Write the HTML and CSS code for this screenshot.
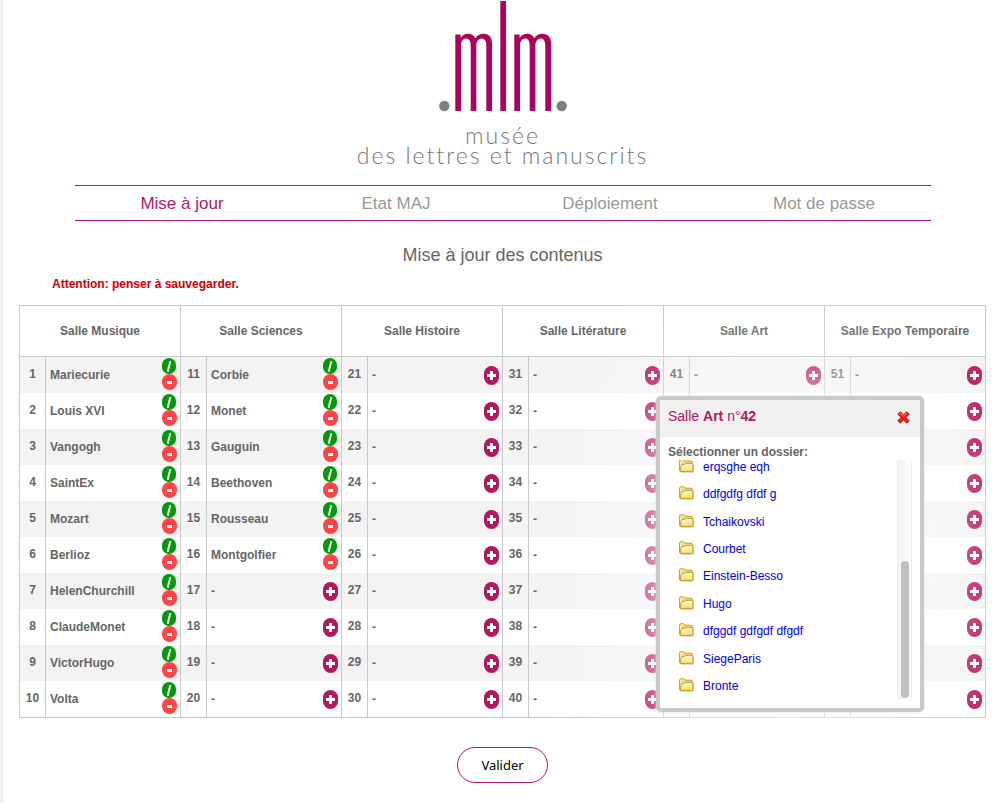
FILE: index.html
```html
<!DOCTYPE html>
<html lang="fr">
<head>
<meta charset="utf-8">
<title>Mise à jour des contenus</title>
<link rel="stylesheet" href="styles.css">
</head>
<body>
<svg class="defs" width="0" height="0" aria-hidden="true">
  <defs>
    <linearGradient id="paper" x1="0" y1="0" x2="0" y2="1">
      <stop offset="0" stop-color="#fffbd8"/>
      <stop offset="1" stop-color="#fbdc6c"/>
    </linearGradient>
    <symbol id="folder" viewBox="0 0 15 14">
      <path d="M2 13.200h12.300V5" fill="none" stroke="#8a8a8a" stroke-opacity=".45"/>
      <path d="M.6 11.400V2.200Q.6.8 2 .8h2.600q.8 0 1.200.8l.3.600H12q1.300 0 1.300 1.300v8.100z" fill="#f5dc7a" stroke="#c99a1c"/>
      <path d="M1.600 10V2.600q0-.8.8-.8h2" fill="none" stroke="#fff6c0"/>
      <path d="M1 12.400 2.300 6.200q.2-.8 1-.8H5.600l1.200-1.100h6.200q.9 0 .9.900v6.200q0 1-1 1z" fill="url(#paper)" stroke="#c99a1c"/>
    </symbol>
  </defs>
</svg>
<div class="page">
  <header class="brand">
    <svg class="brand-mark" width="128" height="112" viewBox="0 0 128 112" role="img" aria-label="mlm">
      <g fill="#b0005e">
        <path id="arches" d="M16.300 34.500H21.600V38C23.500 35 26 33.800 29 33.800C32.500 33.800 35 35.500 36.300 38.300C38 35.500 41 33.800 44.500 33.800C50 33.800 53 37.500 53 43.500V111H47.300V46C47.300 41 45.500 38.600 42.600 38.600S37.300 41.500 37.300 46V111H31.700V46C31.700 41 30 38.600 27 38.600S22 41.500 22 46V111H16.300z"/>
        <path d="M61.300 1H67V111H61.300z"/>
        <use href="#arches" x="59"/>
      </g>
      <circle cx="5.300" cy="106" r="5.200" fill="#808084"/>
      <circle cx="122.700" cy="106" r="5.200" fill="#808084"/>
    </svg>
    <p class="brand-name">musée<br>des lettres et manuscrits</p>
  </header>

  <nav class="nav">
    <a class="current" href="#maj">Mise à jour</a>
    <a href="#etat">Etat MAJ</a>
    <a href="#deploiement">Déploiement</a>
    <a href="#passe">Mot de passe</a>
  </nav>

  <main>
    <h1>Mise à jour des contenus</h1>
    <p class="warning">Attention: penser à sauvegarder.</p>

    <div class="board">
      <table class="rooms">
        <colgroup><col class="num"><col><col class="num"><col><col class="num"><col><col class="num"><col><col class="num"><col><col class="num"><col></colgroup>
        <thead>
          <tr>
            <th colspan="2">Salle Musique</th>
            <th colspan="2">Salle Sciences</th>
            <th colspan="2">Salle Histoire</th>
            <th colspan="2">Salle Litérature</th>
            <th colspan="2">Salle Art</th>
            <th colspan="2">Salle Expo Temporaire</th>
          </tr>
        </thead>
        <tbody>
          <tr>
            <td>1</td><td><div class="slot">Mariecurie<span class="tools"><button class="edit" aria-label="Modifier"></button><button class="del" aria-label="Retirer"></button></span></div></td>
            <td>11</td><td><div class="slot">Corbie<span class="tools"><button class="edit" aria-label="Modifier"></button><button class="del" aria-label="Retirer"></button></span></div></td>
            <td>21</td><td><div class="slot">-<button class="add" aria-label="Ajouter"></button></div></td>
            <td>31</td><td><div class="slot">-<button class="add" aria-label="Ajouter"></button></div></td>
            <td>41</td><td><div class="slot">-<button class="add" aria-label="Ajouter"></button></div></td>
            <td>51</td><td><div class="slot">-<button class="add" aria-label="Ajouter"></button></div></td>
          </tr>
          <tr>
            <td>2</td><td><div class="slot">Louis XVI<span class="tools"><button class="edit" aria-label="Modifier"></button><button class="del" aria-label="Retirer"></button></span></div></td>
            <td>12</td><td><div class="slot">Monet<span class="tools"><button class="edit" aria-label="Modifier"></button><button class="del" aria-label="Retirer"></button></span></div></td>
            <td>22</td><td><div class="slot">-<button class="add" aria-label="Ajouter"></button></div></td>
            <td>32</td><td><div class="slot">-<button class="add" aria-label="Ajouter"></button></div></td>
            <td></td><td></td>
            <td></td><td><div class="slot"><button class="add" aria-label="Ajouter"></button></div></td>
          </tr>
          <tr>
            <td>3</td><td><div class="slot">Vangogh<span class="tools"><button class="edit" aria-label="Modifier"></button><button class="del" aria-label="Retirer"></button></span></div></td>
            <td>13</td><td><div class="slot">Gauguin<span class="tools"><button class="edit" aria-label="Modifier"></button><button class="del" aria-label="Retirer"></button></span></div></td>
            <td>23</td><td><div class="slot">-<button class="add" aria-label="Ajouter"></button></div></td>
            <td>33</td><td><div class="slot">-<button class="add" aria-label="Ajouter"></button></div></td>
            <td></td><td></td>
            <td></td><td><div class="slot"><button class="add" aria-label="Ajouter"></button></div></td>
          </tr>
          <tr>
            <td>4</td><td><div class="slot">SaintEx<span class="tools"><button class="edit" aria-label="Modifier"></button><button class="del" aria-label="Retirer"></button></span></div></td>
            <td>14</td><td><div class="slot">Beethoven<span class="tools"><button class="edit" aria-label="Modifier"></button><button class="del" aria-label="Retirer"></button></span></div></td>
            <td>24</td><td><div class="slot">-<button class="add" aria-label="Ajouter"></button></div></td>
            <td>34</td><td><div class="slot">-<button class="add" aria-label="Ajouter"></button></div></td>
            <td></td><td></td>
            <td></td><td><div class="slot"><button class="add" aria-label="Ajouter"></button></div></td>
          </tr>
          <tr>
            <td>5</td><td><div class="slot">Mozart<span class="tools"><button class="edit" aria-label="Modifier"></button><button class="del" aria-label="Retirer"></button></span></div></td>
            <td>15</td><td><div class="slot">Rousseau<span class="tools"><button class="edit" aria-label="Modifier"></button><button class="del" aria-label="Retirer"></button></span></div></td>
            <td>25</td><td><div class="slot">-<button class="add" aria-label="Ajouter"></button></div></td>
            <td>35</td><td><div class="slot">-<button class="add" aria-label="Ajouter"></button></div></td>
            <td></td><td></td>
            <td></td><td><div class="slot"><button class="add" aria-label="Ajouter"></button></div></td>
          </tr>
          <tr>
            <td>6</td><td><div class="slot">Berlioz<span class="tools"><button class="edit" aria-label="Modifier"></button><button class="del" aria-label="Retirer"></button></span></div></td>
            <td>16</td><td><div class="slot">Montgolfier<span class="tools"><button class="edit" aria-label="Modifier"></button><button class="del" aria-label="Retirer"></button></span></div></td>
            <td>26</td><td><div class="slot">-<button class="add" aria-label="Ajouter"></button></div></td>
            <td>36</td><td><div class="slot">-<button class="add" aria-label="Ajouter"></button></div></td>
            <td></td><td></td>
            <td></td><td><div class="slot"><button class="add" aria-label="Ajouter"></button></div></td>
          </tr>
          <tr>
            <td>7</td><td><div class="slot">HelenChurchill<span class="tools"><button class="edit" aria-label="Modifier"></button><button class="del" aria-label="Retirer"></button></span></div></td>
            <td>17</td><td><div class="slot">-<button class="add" aria-label="Ajouter"></button></div></td>
            <td>27</td><td><div class="slot">-<button class="add" aria-label="Ajouter"></button></div></td>
            <td>37</td><td><div class="slot">-<button class="add" aria-label="Ajouter"></button></div></td>
            <td></td><td></td>
            <td></td><td><div class="slot"><button class="add" aria-label="Ajouter"></button></div></td>
          </tr>
          <tr>
            <td>8</td><td><div class="slot">ClaudeMonet<span class="tools"><button class="edit" aria-label="Modifier"></button><button class="del" aria-label="Retirer"></button></span></div></td>
            <td>18</td><td><div class="slot">-<button class="add" aria-label="Ajouter"></button></div></td>
            <td>28</td><td><div class="slot">-<button class="add" aria-label="Ajouter"></button></div></td>
            <td>38</td><td><div class="slot">-<button class="add" aria-label="Ajouter"></button></div></td>
            <td></td><td></td>
            <td></td><td><div class="slot"><button class="add" aria-label="Ajouter"></button></div></td>
          </tr>
          <tr>
            <td>9</td><td><div class="slot">VictorHugo<span class="tools"><button class="edit" aria-label="Modifier"></button><button class="del" aria-label="Retirer"></button></span></div></td>
            <td>19</td><td><div class="slot">-<button class="add" aria-label="Ajouter"></button></div></td>
            <td>29</td><td><div class="slot">-<button class="add" aria-label="Ajouter"></button></div></td>
            <td>39</td><td><div class="slot">-<button class="add" aria-label="Ajouter"></button></div></td>
            <td></td><td></td>
            <td></td><td><div class="slot"><button class="add" aria-label="Ajouter"></button></div></td>
          </tr>
          <tr>
            <td>10</td><td><div class="slot">Volta<span class="tools"><button class="edit" aria-label="Modifier"></button><button class="del" aria-label="Retirer"></button></span></div></td>
            <td>20</td><td><div class="slot">-<button class="add" aria-label="Ajouter"></button></div></td>
            <td>30</td><td><div class="slot">-<button class="add" aria-label="Ajouter"></button></div></td>
            <td>40</td><td><div class="slot">-<button class="add" aria-label="Ajouter"></button></div></td>
            <td></td><td></td>
            <td></td><td><div class="slot"><button class="add" aria-label="Ajouter"></button></div></td>
          </tr>
        </tbody>
      </table>

      <section class="popup" role="dialog" aria-labelledby="popup-title">
        <header class="popup-head">
          <h2 id="popup-title">Salle <b>Art</b> n°<b>42</b></h2>
          <button class="close" aria-label="Fermer">
            <svg width="13" height="13" viewBox="0 0 13 13"><path d="M3.200.8 6.500 3.900 9.800.8 12.200 3.200 9 6.500l3.200 3.300-2.400 2.400-3.300-3.100-3.300 3.100L.8 9.800 4 6.500.8 3.200z" fill="#e8201c" stroke="#b01010" stroke-width=".9" stroke-linejoin="round"/><path d="M2.200 3.200 3.200 2.200 6.500 5.300 9.800 2.200" fill="none" stroke="#ff8f80" stroke-width=".9"/></svg>
          </button>
        </header>
        <p class="popup-label">Sélectionner un dossier:</p>
        <div class="viewport">
          <ul class="folders">
            <li><svg width="15" height="14"><use href="#folder"/></svg><a href="#d1">erqsghe eqh</a></li>
            <li><svg width="15" height="14"><use href="#folder"/></svg><a href="#d2">ddfgdfg dfdf g</a></li>
            <li><svg width="15" height="14"><use href="#folder"/></svg><a href="#d3">Tchaikovski</a></li>
            <li><svg width="15" height="14"><use href="#folder"/></svg><a href="#d4">Courbet</a></li>
            <li><svg width="15" height="14"><use href="#folder"/></svg><a href="#d5">Einstein-Besso</a></li>
            <li><svg width="15" height="14"><use href="#folder"/></svg><a href="#d6">Hugo</a></li>
            <li><svg width="15" height="14"><use href="#folder"/></svg><a href="#d7">dfggdf gdfgdf dfgdf</a></li>
            <li><svg width="15" height="14"><use href="#folder"/></svg><a href="#d8">SiegeParis</a></li>
            <li><svg width="15" height="14"><use href="#folder"/></svg><a href="#d9">Bronte</a></li>
          </ul>
          <div class="track"><div class="thumb"></div></div>
        </div>
      </section>
    </div>

    <div class="actions"><button class="submit" type="submit">Valider</button></div>
  </main>
</div>
</body>
</html>
```

FILE: styles.css
```css
* { box-sizing: border-box; }

body {
  margin: 0;
  background: #f0f0f0;
  color: #666;
  font: 12px/16px "Liberation Sans", Arial, sans-serif;
}

h1, h2, p, ul { margin: 0; padding: 0; }

button {
  margin: 0;
  padding: 0;
  border: 0;
  background: none;
  cursor: pointer;
}

.defs { position: absolute; }

.page {
  min-height: 100vh;
  margin-left: 3px;
  padding-bottom: 20px;
  background: #fff;
}

.brand {
  display: flex;
  flex-direction: column;
  align-items: center;
}

.brand-mark { display: block; }

.brand-name {
  padding-top: 13px;
  color: #77777b;
  font: 300 23px/20px Lato, "Liberation Sans", sans-serif;
  letter-spacing: 2px;
  text-align: center;
}

.nav {
  display: grid;
  grid-template-columns: repeat(4, 1fr);
  margin: 20px 71px 0 72px;
  padding-top: 1px;
  border: solid #b5175f;
  border-width: 1px 0;
  font-size: 17px;
  line-height: 33px;
  text-align: center;
}

.nav a { color: #999; text-decoration: none; }
.nav .current { color: #b5175f; }

h1 {
  margin-top: 22px;
  font-size: 18px;
  font-weight: normal;
  line-height: 24px;
  text-align: center;
}

.warning {
  margin: 9px 0 0 49px;
  color: #c00;
  font-weight: bold;
}

.board {
  position: relative;
  margin: 13px 16px 0;
}

.rooms {
  width: 100%;
  border-collapse: collapse;
  table-layout: fixed;
  border: 1px solid #c9c9c9;
  font-weight: bold;
}

.rooms .num { width: 26px; }

.rooms th {
  height: 51px;
  padding: 0;
  border: 1px solid #c9c9c9;
}

.rooms td {
  height: 36px;
  padding: 0;
  border: solid #c9c9c9;
  border-width: 0 1px;
}

.rooms td:nth-child(odd) {
  padding-bottom: 2px;
  text-align: center;
}
.rooms tbody tr:nth-child(odd) { background: #f3f3f3; }

.slot {
  display: flex;
  align-items: center;
  justify-content: space-between;
  height: 36px;
  padding: 0 3px 0 4px;
}

.slot > :only-child { margin-left: auto; }

.tools {
  display: flex;
  flex-direction: column;
  padding-bottom: 2px;
}

.edit, .del, .add {
  display: flex;
  align-items: center;
  justify-content: center;
  width: 15px;
}

.edit { width: 14px; height: 16px; border-radius: 8px; background: #009a0a; }
.edit::before {
  content: "";
  width: 2px;
  height: 11px;
  background: #fff;
  transform: rotate(14deg);
}

.del { height: 16px; border-radius: 8px; background: #ff4545; }
.del::before {
  content: "";
  width: 5px;
  height: 3px;
  background: #fff;
}

.add {
  height: 19px;
  border-radius: 8px;
  background:
    linear-gradient(#fff, #fff) center / 9px 3px no-repeat,
    linear-gradient(#fff, #fff) center / 3px 9px no-repeat,
    #b5175f;
}

.popup {
  position: absolute;
  top: 91px;
  right: 62px;
  width: 268px;
  padding-bottom: 8px;
  border: 4px solid #c9c9c9;
  border-radius: 5px;
  background: #fff;
  box-shadow: 0 0 3px #ddd, 0 0 120px #fff;
}

.popup-head {
  display: flex;
  align-items: center;
  justify-content: space-between;
  height: 37px;
  padding: 0 10px 2px 8px;
  background: #f0f0f0;
}

.popup-head h2 {
  color: #b5175f;
  font-size: 14px;
  font-weight: normal;
  padding-bottom: 4px;
}

.close svg { display: block; }

.popup-label {
  padding: 7px 8px 0;
  font-weight: bold;
}

.viewport {
  display: flex;
  align-items: flex-end;
  justify-content: space-between;
  height: 240px;
  padding: 0 8px 0 19px;
  overflow: hidden;
}

.folders {
  display: grid;
  grid-auto-rows: 1fr;
  height: 247px;
  list-style: none;
}

.folders li {
  display: flex;
  align-items: center;
  gap: 9px;
}

.folders svg { margin-bottom: 2px; }

.folders a { color: #00e; text-decoration: none; }

.track {
  display: flex;
  align-items: flex-end;
  justify-content: center;
  width: 15px;
  height: 240px;
  padding-bottom: 2px;
  border: solid #eee;
  border-width: 0 1px;
  background: linear-gradient(to right, #f3f3f3, #fff);
}

.thumb {
  width: 8px;
  height: 137px;
  border-radius: 4px;
  background: #c0c0c0;
}

.actions {
  display: flex;
  justify-content: center;
  padding-top: 29px;
}

.submit {
  height: 36px;
  padding: 0 23px;
  border: 1px solid #b5175f;
  border-radius: 18px;
  color: #000;
  font: 13px/20px "Noto Sans", sans-serif;
}
```
